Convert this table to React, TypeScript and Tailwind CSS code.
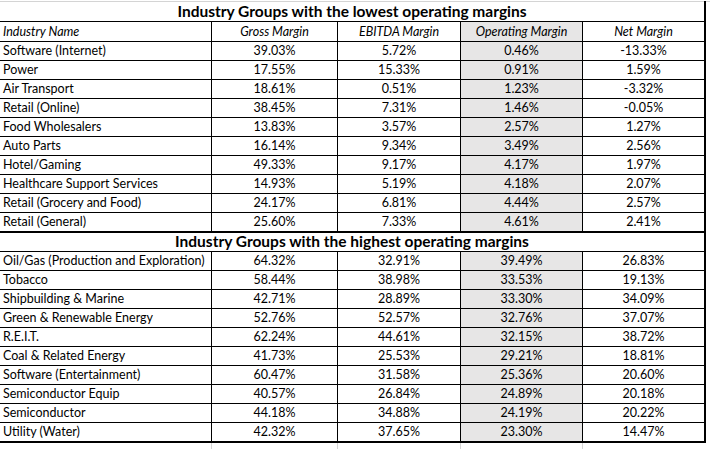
import React from "react";

type Row = [string, string, string, string, string];

const lowest: Row[] = [
  ["Software (Internet)", "39.03%", "5.72%", "0.46%", "-13.33%"],
  ["Power", "17.55%", "15.33%", "0.91%", "1.59%"],
  ["Air Transport", "18.61%", "0.51%", "1.23%", "-3.32%"],
  ["Retail (Online)", "38.45%", "7.31%", "1.46%", "-0.05%"],
  ["Food Wholesalers", "13.83%", "3.57%", "2.57%", "1.27%"],
  ["Auto Parts", "16.14%", "9.34%", "3.49%", "2.56%"],
  ["Hotel/Gaming", "49.33%", "9.17%", "4.17%", "1.97%"],
  ["Healthcare Support Services", "14.93%", "5.19%", "4.18%", "2.07%"],
  ["Retail (Grocery and Food)", "24.17%", "6.81%", "4.44%", "2.57%"],
  ["Retail (General)", "25.60%", "7.33%", "4.61%", "2.41%"],
];

const highest: Row[] = [
  ["Oil/Gas (Production and Exploration)", "64.32%", "32.91%", "39.49%", "26.83%"],
  ["Tobacco", "58.44%", "38.98%", "33.53%", "19.13%"],
  ["Shipbuilding & Marine", "42.71%", "28.89%", "33.30%", "34.09%"],
  ["Green & Renewable Energy", "52.76%", "52.57%", "32.76%", "37.07%"],
  ["R.E.I.T.", "62.24%", "44.61%", "32.15%", "38.72%"],
  ["Coal & Related Energy", "41.73%", "25.53%", "29.21%", "18.81%"],
  ["Software (Entertainment)", "60.47%", "31.58%", "25.36%", "20.60%"],
  ["Semiconductor Equip", "40.57%", "26.84%", "24.89%", "20.18%"],
  ["Semiconductor", "44.18%", "34.88%", "24.19%", "20.22%"],
  ["Utility (Water)", "42.32%", "37.65%", "23.30%", "14.47%"],
];

// column widths incl. right border
const widths = ["w-[212px]", "w-[126px]", "w-[123px]", "w-[122px]", "w-[121px]"];

const DataRow = ({ row, italic, last, tall }: { row: Row; italic?: boolean; last?: boolean; tall?: boolean }) => (
  <div
    className={`flex ${tall ? "h-[20px]" : last ? "h-[18px]" : "h-[19px]"} ${
      last ? "" : "border-b border-black"
    } ${italic ? "italic" : ""}`}
  >
    {row.map((cell, i) => (
      <div
        key={i}
        className={`${widths[i]} shrink-0 flex items-center leading-none pt-px ${
          i === 0 ? "pl-[3px] justify-start" : "justify-center"
        } ${i === 3 ? "bg-[#e7e6e6]" : ""} ${i < 4 ? "border-r border-black" : ""}`}
      >
        {cell}
      </div>
    ))}
  </div>
);

const TitleRow = ({ title, thickTop }: { title: string; thickTop?: boolean }) => (
  <div
    className={`flex items-center justify-center border-b border-black font-bold text-[15.5px] leading-none ${
      thickTop ? "border-t-2 h-[21px]" : "h-[20px]"
    }`}
  >
    {title}
  </div>
);

export default function App() {
  return (
    <div
      className="bg-white w-[710px] h-[449px] overflow-hidden text-black text-[12.5px]"
      style={{ fontFamily: "Lato, 'Liberation Sans', sans-serif" }}
    >
      <div className="h-px" />
      <div className="flex">
        <div className="w-[706px] border-r-2 border-black border-b-2">
          <div className="h-px bg-[#d4d4d4]" />
          <TitleRow title="Industry Groups with the lowest operating margins" />
          <DataRow row={["Industry Name", "Gross Margin", "EBITDA Margin", "Operating Margin", "Net Margin"]} italic tall />
          {lowest.map((r, i) => (
            <DataRow key={r[0]} row={r} last={i === lowest.length - 1} />
          ))}
          <TitleRow title="Industry Groups with the highest operating margins" thickTop />
          {highest.map((r, i) => (
            <DataRow key={r[0]} row={r} last={i === highest.length - 1} />
          ))}
        </div>
        <div className="flex-1 border-t border-[#d4d4d4]" />
      </div>
      <div className="flex h-[8px]">
        {widths.slice(0, 4).map((w, i) => (
          <div key={i} className={`${w} shrink-0 border-r border-[#d4d4d4]`} />
        ))}
      </div>
    </div>
  );
}
